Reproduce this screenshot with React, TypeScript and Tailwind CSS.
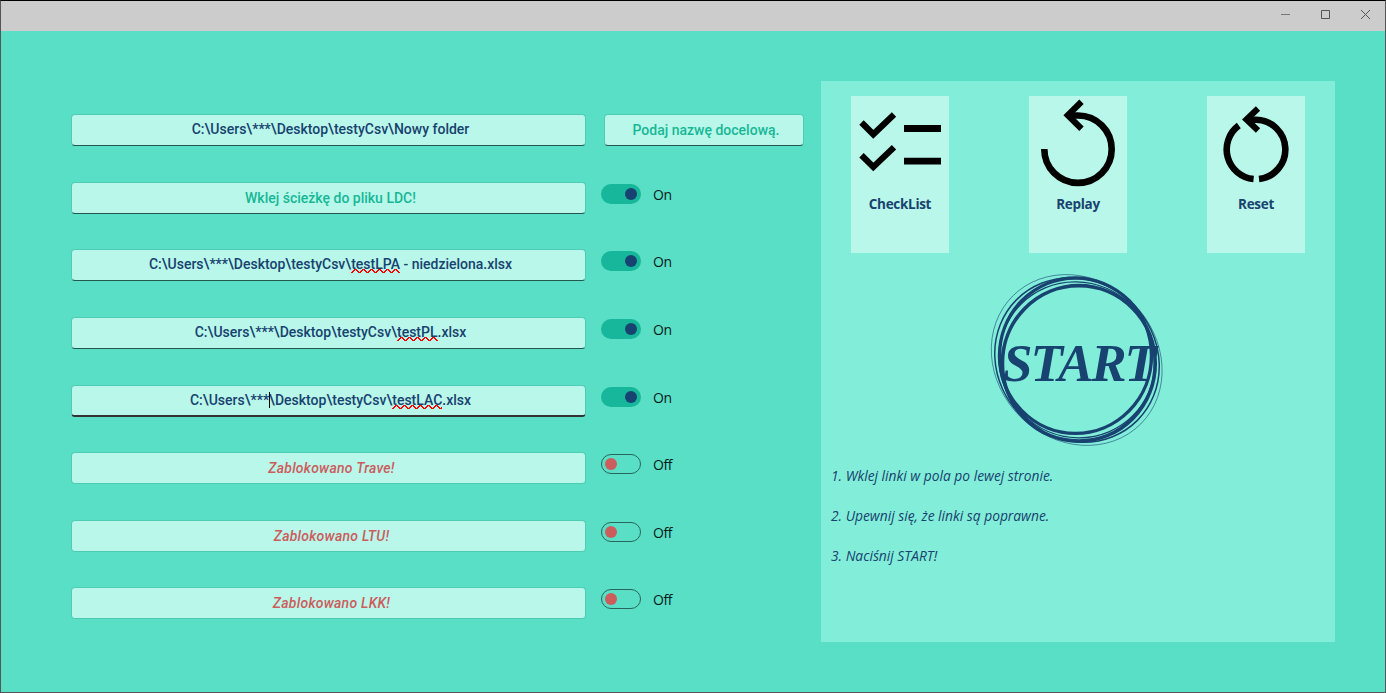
import React, { ReactNode } from 'react';

function Misspelled({ children }: { children: string }) {
  return (
    <span className="relative inline-block">
      {children}
      <svg className="absolute left-0 top-[12px] h-[6px] w-full overflow-hidden" shapeRendering="crispEdges">
        <path
          d={'M0 4.500 h1' + Array.from({ length: 12 }, () => ' l3 -3 h1 l3 3 h1').join('')}
          fill="none"
          stroke="#ff0000"
          strokeWidth="1.8"
        />
      </svg>
    </span>
  );
}

type Kind = 'value' | 'placeholder' | 'blocked';

function Field({ kind, focused, narrow, children }: { kind: Kind; focused?: boolean; narrow?: boolean; children: ReactNode }) {
  const tone =
    kind === 'value'
      ? 'text-[#18426f] border-b-[#24564d]'
      : kind === 'placeholder'
        ? 'text-[#17b796] border-b-[#24564d]'
        : 'text-[#cd5c5c] italic tracking-[0.25px] border-b-[#4dcbb2]';
  const left = narrow ? 'pl-[4px]' : kind === 'blocked' ? 'pl-[6px]' : 'pl-[4px]';
  const bottom = kind !== 'value' ? 'pb-0' : focused ? 'pb-px' : 'pb-[2px]';
  return (
    <div
      className={`flex h-8 items-center justify-center whitespace-pre rounded-[4px] border border-[#4fccb4] bg-[#b8f7ea] text-[14px] font-medium leading-4 ${
        narrow ? 'w-[200px]' : 'w-[515px]'
      } ${left} ${bottom} ${tone} ${focused ? 'border-b-2 border-b-[#333333]' : ''}`}
    >
      <span>{children}</span>
    </div>
  );
}

function Toggle({ on }: { on: boolean }) {
  return (
    <div className="flex items-start pl-[15px] pt-[2px]">
      <div
        className={`flex h-5 w-10 items-center rounded-full ${
          on ? 'justify-end bg-[#17b79b] pr-1' : 'border border-[#28665b] pl-[3px]'
        }`}
      >
        <div className={`h-3 w-3 rounded-full ${on ? 'bg-[#18426f]' : 'bg-[#cd5c5c]'}`} />
      </div>
      <span className="ml-3 mt-px font-['Open_Sans',sans-serif] text-[14px] leading-5 tracking-[-0.4px] text-[#0b1b18]">
        {on ? 'On' : 'Off'}
      </span>
    </div>
  );
}

function Row({ children }: { children: ReactNode }) {
  return <div className="flex h-[67.57px] items-start">{children}</div>;
}

function ActionCard({ label, children }: { label: string; children: ReactNode }) {
  return (
    <div className="flex h-[157px] w-[98px] flex-col items-center bg-[#b8f7ea]">
      <svg className="blur-[0.6px]" width="98" height="98" viewBox="0 0 98 98" fill="none" stroke="#000">
        {children}
      </svg>
      <span className="font-['Open_Sans',sans-serif] text-[13.5px] font-bold leading-5 tracking-[-0.3px] text-[#18426f]">
        {label}
      </span>
    </div>
  );
}

function StartButton() {
  return (
    <button className="relative ml-[169px] mt-5 flex h-[174px] w-[174px] items-center justify-center">
      <svg className="absolute inset-0" width="174" height="174" viewBox="990 273 174 174" fill="none" stroke="#18426f">
        <ellipse cx="1078.800" cy="363.400" rx="76.400" ry="77.700" strokeWidth="3.7" />
        <ellipse cx="1075.500" cy="355.700" rx="76" ry="77.700" strokeWidth="3.4" />
        <ellipse cx="1077" cy="359.800" rx="79" ry="77" strokeWidth="1.3" transform="rotate(45 1077 359.800)" />
        <ellipse cx="1077" cy="360" rx="85.400" ry="79" strokeWidth="1.5" transform="rotate(45 1077 360)" />
        <ellipse cx="1076.700" cy="360" rx="90.500" ry="80" strokeWidth="0.8" strokeOpacity="0.7" transform="rotate(45 1076.700 360)" />
      </svg>
      <span className="relative top-[3px] whitespace-nowrap pl-1 font-['Liberation_Serif',serif] text-[53px] font-bold italic leading-[60px] tracking-[-2px] text-[#18426f]">
        START
      </span>
    </button>
  );
}

export default function App() {
  return (
    <div className="flex h-[693px] w-[1386px] flex-col overflow-hidden border border-[#555555] border-t-black bg-[#58dfc6] font-[Roboto,sans-serif]">
      <header className="flex h-[30px] shrink-0 items-center justify-end bg-[#cccccc] pr-[13px]">
        <svg width="92" height="12" viewBox="0 0 92 12" fill="none" stroke="#555" strokeWidth="1">
          <path d="M1 4.500h9" stroke="#777" />
          <path d="M41.500.500h8v8h-8z" />
          <path d="M81 0l9 9M90 0l-9 9" />
        </svg>
      </header>
      <main className="flex pl-[70px]">
        <section className="w-[750px] pt-[83.3px]">
          <Row>
            <Field kind="value">{'C:\\Users\\***\\Desktop\\testyCsv\\Nowy folder'}</Field>
            <div className="ml-[18px]">
              <Field kind="placeholder" narrow>Podaj nazwę docelową.</Field>
            </div>
          </Row>
          <Row>
            <Field kind="placeholder">Wklej ścieżkę do pliku LDC!</Field>
            <Toggle on />
          </Row>
          <Row>
            <Field kind="value">
              {'C:\\Users\\***\\Desktop\\testyCsv\\'}<Misspelled>testLPA</Misspelled>{' - niedzielona.xlsx'}
            </Field>
            <Toggle on />
          </Row>
          <Row>
            <Field kind="value">
              {'C:\\Users\\***\\Desktop\\testyCsv\\'}<Misspelled>testPL</Misspelled>.xlsx
            </Field>
            <Toggle on />
          </Row>
          <Row>
            <Field kind="value" focused>
              {'C:\\Users\\***'}
              <span className="relative"><i className="absolute top-0 left-0 h-4 w-px bg-black" /></span>
              {'\\Desktop\\testyCsv\\'}<Misspelled>testLAC</Misspelled>.xlsx
            </Field>
            <Toggle on />
          </Row>
          <Row>
            <Field kind="blocked">Zablokowano Trave!</Field>
            <Toggle on={false} />
          </Row>
          <Row>
            <Field kind="blocked">Zablokowano LTU!</Field>
            <Toggle on={false} />
          </Row>
          <Row>
            <Field kind="blocked">Zablokowano LKK!</Field>
            <Toggle on={false} />
          </Row>
        </section>
        <section className="mt-[50px] flex h-[561px] w-[514px] flex-col bg-[#82eed9] pt-[15px]">
          <div className="flex justify-between px-[30px]">
            <ActionCard label="CheckList">
              <path d="M10.500 26.500L22.300 38.300L43 18.500M10.500 59.200L22.300 71L43 51.200" strokeWidth="6.200" />
              <path d="M53 32.500h37M53 65.200h37" strokeWidth="6.800" />
            </ActionCard>
            <ActionCard label="Replay">
              <path d="M15.300 53a33.700 33.700 0 1 0 33.700-33.500h-10" strokeWidth="6.600" />
              <path d="M52.500 5.800L38.800 19.300L52.500 32.800" strokeWidth="6.200" />
            </ActionCard>
            <ActionCard label="Reset">
              <path d="M46.600 83A29.700 29.700 0 0 1 31.800 29.500M52 83A29.700 29.700 0 0 0 49.300 23.800h-10" strokeWidth="6.600" />
              <path d="M51 12.500L39.500 23.500L51 34.500" strokeWidth="6.200" />
            </ActionCard>
          </div>
          <StartButton />
          <div className="ml-[10px] mt-[19px] flex flex-col gap-5 font-['Open_Sans',sans-serif] text-[13.8px] italic leading-5 text-[#18426f]">
            <p>1. Wklej linki w pola po lewej stronie.</p>
            <p>2. Upewnij się, że linki są poprawne.</p>
            <p>3. Naciśnij START!</p>
          </div>
        </section>
      </main>
    </div>
  );
}
